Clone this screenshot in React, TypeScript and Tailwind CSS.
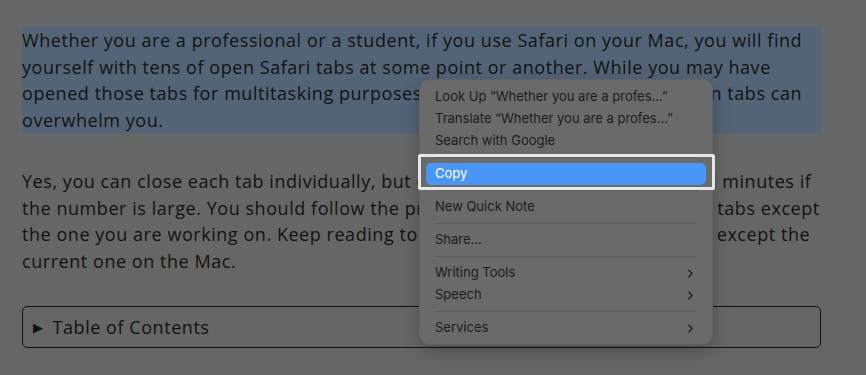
import { ChevronRight } from "lucide-react"

const intro = [
  "Whether you are a professional or a student, if you use Safari on your Mac, you will find",
  "yourself with tens of open Safari tabs at some point or another. While you may have",
  "opened those tabs for multitasking purposes, stacking too many of these open tabs can",
  "overwhelm you.",
]

const body = [
  "Yes, you can close each tab individually, but doing that would take you several minutes if",
  "the number is large. You should follow the procedure below to close all Safari tabs except",
  "the one you are working on. Keep reading to learn how to close all Safari tabs except the",
  "current one on the Mac.",
]

function MenuItem({ label, sub }: { label: string; sub?: boolean }) {
  return (
    <div className="h-[22px] mx-[6px] px-[9px] flex items-center justify-between text-[#1c1c1c]">
      <span>{label}</span>
      {sub && <ChevronRight className="w-[13px] h-[13px] text-[#1c1c1c]" strokeWidth={2.5} />}
    </div>
  )
}

function Separator() {
  return <div className="my-[5px] mx-[15px] h-px bg-[#5f5f5f]" />
}

export default function App() {
  return (
    <div className="relative w-[866px] h-[375px] overflow-hidden bg-[#666666] pl-[22px] pt-[27px] text-[#121212] font-['Open_Sans',sans-serif] font-medium">
      <p className="w-[799px] bg-[#536477] text-[18px] leading-[26.5px] tracking-[0.55px]">
        {intro.map((line) => (
          <span key={line} className="block whitespace-nowrap">{line}</span>
        ))}
      </p>

      <p className="w-[799px] mt-[35px] text-[18px] leading-[26.5px] tracking-[0.55px]">
        {body.map((line) => (
          <span key={line} className="block whitespace-nowrap">{line}</span>
        ))}
      </p>

      <div className="w-[799px] h-[42px] mt-[32px] rounded-[5px] border border-[#111] flex items-center pl-[10px] gap-[9px] text-[18px] tracking-[0.55px]">
        <span className="text-[13px] leading-none">▶</span>
        <span>Table of Contents</span>
      </div>

      {/* context menu */}
      <div className="absolute left-[419px] top-[79px] w-[294px] rounded-[10px] bg-[#6a6a6a] border border-[#626262] shadow-[0_6px_18px_rgba(0,0,0,0.25)] pt-[6px] pb-[5px] text-[13px] font-normal font-['Inter',sans-serif]">
        <MenuItem label="Look Up “Whether you are a profes...”" />
        <MenuItem label="Translate “Whether you are a profes...”" />
        <MenuItem label="Search with Google" />
        <Separator />
        <div className="h-[22px] mx-[6px] px-[9px] flex items-center rounded-[5px] bg-[#4a96f6] text-white">
          Copy
        </div>
        <Separator />
        <MenuItem label="New Quick Note" />
        <Separator />
        <MenuItem label="Share..." />
        <Separator />
        <MenuItem label="Writing Tools" sub />
        <MenuItem label="Speech" sub />
        <Separator />
        <MenuItem label="Services" sub />
      </div>

      {/* highlight frame around Copy */}
      <div className="absolute left-[418px] top-[154px] w-[297px] h-[36px] border-[3px] border-[#e6e6e6] rounded-[2px]" />
    </div>
  )
}
